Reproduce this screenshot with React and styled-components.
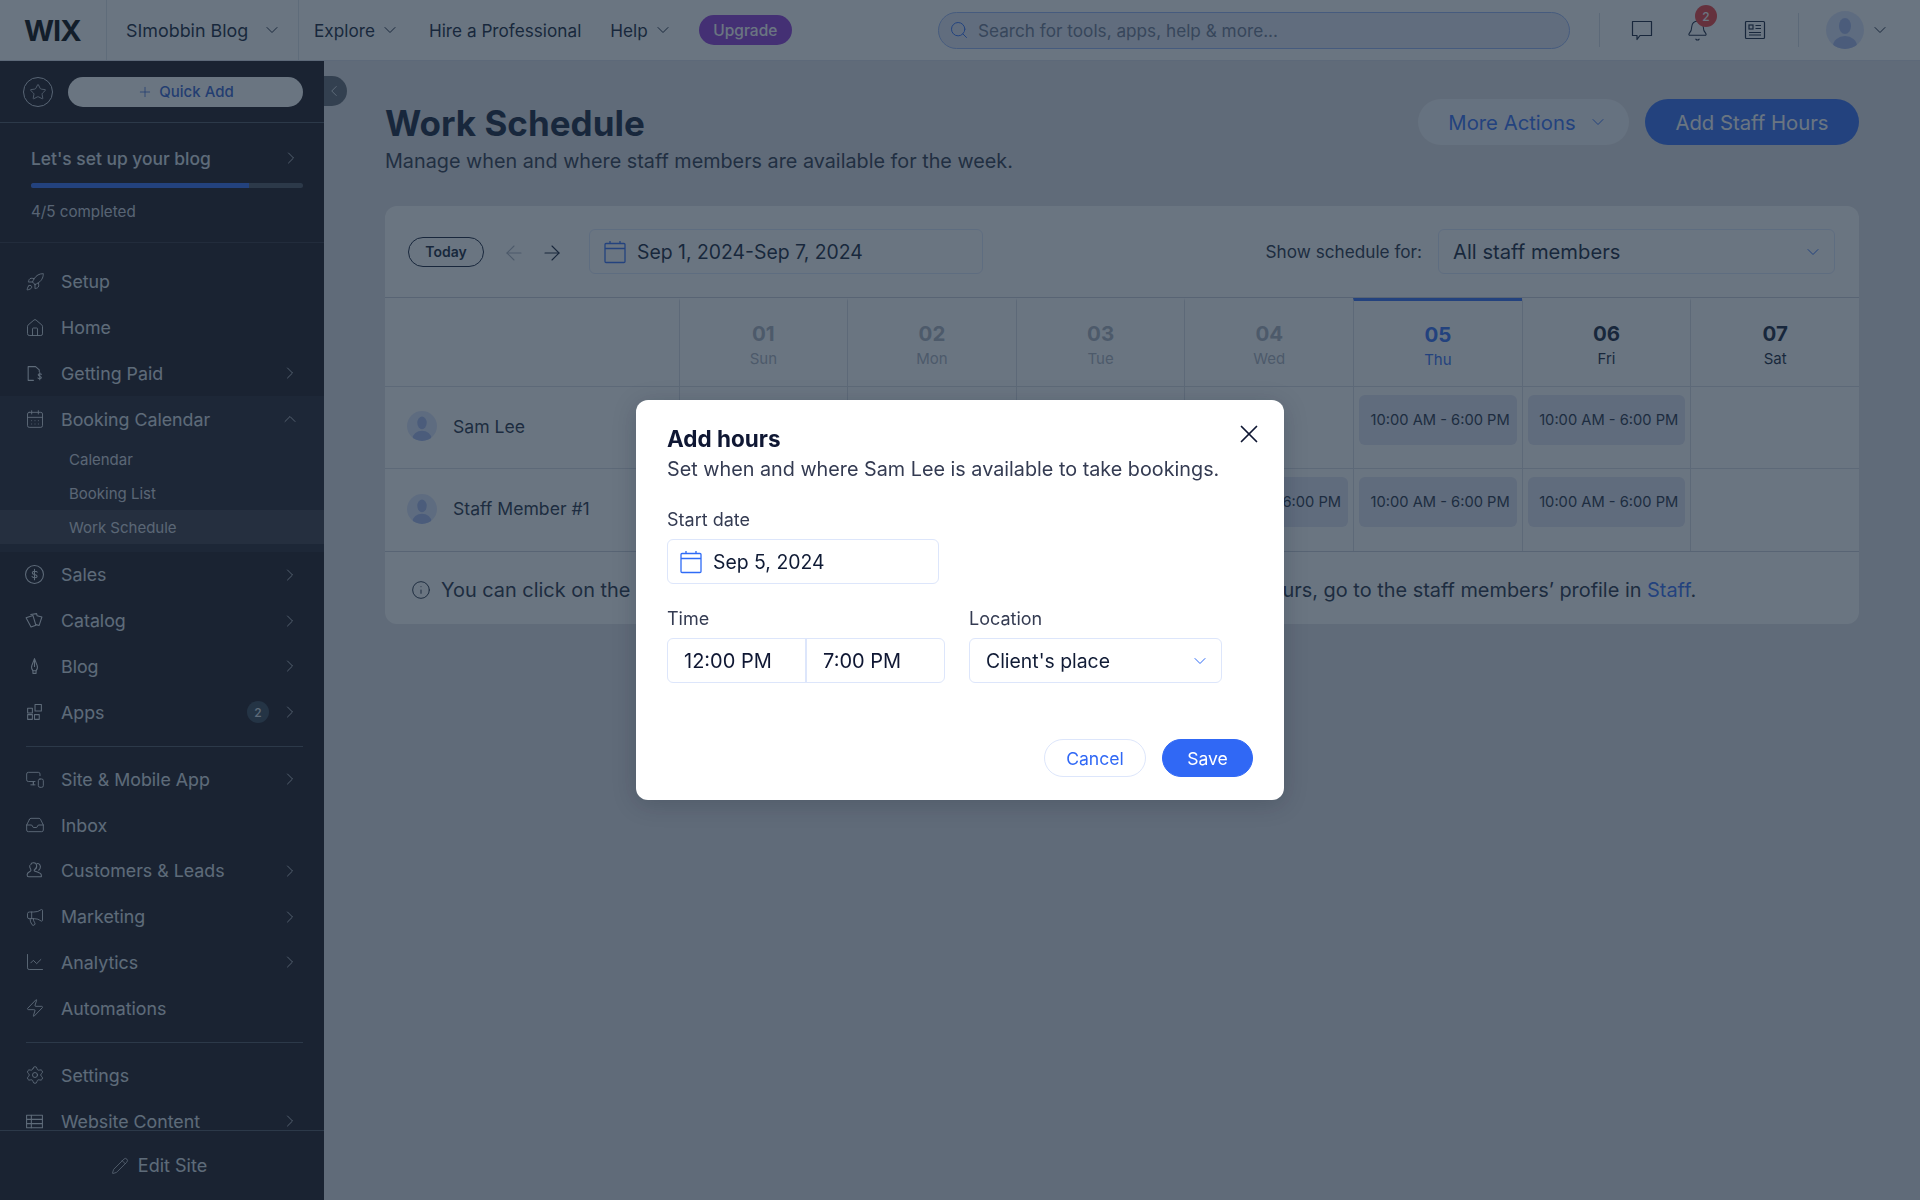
import React from 'react';
import styled, { createGlobalStyle } from 'styled-components';
import {
  ChevronDown, ChevronRight, ChevronUp, ChevronLeft, Plus, Star, Rocket, House, CalendarDays,
  MonitorSmartphone, Inbox, Megaphone, ChartLine, Zap, Settings, Pencil, Search,
  Bell, ArrowLeft, ArrowRight, Info, X,
} from 'lucide-react';

const GlobalStyle = createGlobalStyle`
  html, body { margin: 0; padding: 0; height: 100%; }
  body { font-family: Inter, "Noto Sans", "Liberation Sans", sans-serif; color: #101b35; overflow: hidden; }
  * { box-sizing: border-box; }
`;

const Page = styled.div`
  width: 1920px;
  height: 1200px;
  display: flex;
  flex-direction: column;
  background: #e2e1e6;
  overflow: hidden;
`;

const TopBar = styled.header`
  height: 61px;
  flex: none;
  display: flex;
  align-items: center;
  background: #fff;
  border-bottom: 1px solid #d9dde6;
`;

const LogoCell = styled.div`
  width: 107px;
  height: 100%;
  display: flex;
  align-items: center;
  padding-left: 24px;
  border-right: 1px solid #dfe3ea;
`;

const Logo = styled.span`
  font-size: 29px;
  font-weight: 700;
  letter-spacing: -1px;
  color: #000;
`;

const SiteCell = styled.div`
  width: 192px;
  height: 100%;
  display: flex;
  align-items: center;
  justify-content: space-between;
  padding: 0 16px 0 19px;
  border-right: 1px solid #dfe3ea;
  font-size: 17.9px;
  color: #101b35;
`;

const TopNav = styled.nav`
  display: flex;
  align-items: center;
  gap: 29px;
  padding-left: 15px;
  font-size: 17.2px;
  color: #101b35;
`;

const TopLink = styled.span`
  display: flex;
  align-items: center;
  gap: 5px;
`;

const Upgrade = styled.span`
  height: 30px;
  width: 93px;
  margin-left: -3px;
  display: flex;
  align-items: center;
  justify-content: center;
  border-radius: 15px;
  background: #8f35d8;
  color: #fff;
  font-size: 15.5px;
  font-weight: 500;
`;

const SearchBox = styled.div`
  width: 632px;
  height: 37px;
  margin-left: auto;
  display: flex;
  align-items: center;
  gap: 9px;
  padding-left: 10px;
  border: 1px solid #97b4f5;
  border-radius: 19px;
  background: #e4e8f5;
  color: #6a7590;
  font-size: 17.2px;
`;

const TopRight = styled.div`
  width: 350px;
  height: 100%;
  display: flex;
  align-items: center;
`;

const VLine = styled.span`
  width: 1px;
  height: 34px;
  flex: none;
  background: #d6dbe4;
  margin-left: ${(p) => p.$ml}px;
`;

const TopIcon = styled.span`
  position: relative;
  width: 24px;
  height: 24px;
  flex: none;
  display: flex;
  align-items: center;
  justify-content: center;
  margin-left: ${(p) => p.$ml}px;
  color: #101b35;
`;

const AvatarSlot = styled.span`
  width: 38px;
  height: 38px;
  flex: none;
  display: flex;
  margin-left: ${(p) => p.$ml}px;
`;

const Badge = styled.span`
  position: absolute;
  top: -13px;
  right: -8px;
  width: 22px;
  height: 22px;
  border-radius: 50%;
  display: flex;
  align-items: center;
  justify-content: center;
  background: #f03a3a;
  color: #fff;
  font-size: 12px;
  font-weight: 500;
`;

const Body = styled.div`
  flex: 1;
  display: flex;
  min-height: 0;
`;

const Sidebar = styled.aside`
  width: 324px;
  flex: none;
  display: flex;
  flex-direction: column;
  position: relative;
  background: #15101a;
  color: #dde1e8;
`;

const QuickRow = styled.div`
  height: 62px;
  flex: none;
  display: flex;
  align-items: center;
  gap: 15px;
  padding: 0 21px 0 23px;
  border-bottom: 1px solid #4b4f5c;
`;

const StarCircle = styled.span`
  width: 30px;
  height: 30px;
  flex: none;
  display: flex;
  align-items: center;
  justify-content: center;
  border: 1px solid #c9ced8;
  border-radius: 50%;
`;

const QuickAdd = styled.span`
  flex: 1;
  height: 30px;
  display: flex;
  align-items: center;
  justify-content: center;
  gap: 6px;
  border-radius: 15px;
  background: #fff;
  color: #2f5dd0;
  font-size: 15px;
  font-weight: 500;
`;

const CollapseTab = styled.span`
  position: absolute;
  top: 15px;
  left: 324px;
  width: 23px;
  height: 30px;
  display: flex;
  align-items: center;
  padding-left: 1px;
  border-radius: 0 15px 15px 0;
  background: #5f6570;
  color: #e7eaf0;
`;

const Progress = styled.div`
  height: 120px;
  flex: none;
  padding: 24px 21px 0 31px;
  border-bottom: 1px solid #2c2a35;
`;

const ProgressTitle = styled.div`
  display: flex;
  align-items: center;
  justify-content: space-between;
  height: 22px;
  padding-right: 2px;
  font-size: 17.4px;
  font-weight: 500;
`;

const Track = styled.div`
  height: 5px;
  margin-top: 14px;
  border-radius: 3px;
  background: #4b4f5c;
  overflow: hidden;
`;

const Fill = styled.div`
  height: 100%;
  background: #2f6bf6;
`;

const ProgressNote = styled.div`
  margin-top: 14px;
  font-size: 15.2px;
  color: #c9ced8;
`;

const Nav = styled.nav`
  flex: 1;
  min-height: 0;
  overflow: hidden;
  padding-top: 16px;
`;

const Row = styled.div`
  height: 45.75px;
  display: flex;
  align-items: center;
  padding: 0 24px 0 25px;
  font-size: 17.8px;
`;

const RowIcon = styled.span`
  width: 36px;
  flex: none;
  display: flex;
`;

const RowLabel = styled.span`
  flex: 1;
  white-space: nowrap;
`;

const Count = styled.span`
  width: 22px;
  height: 22px;
  margin-right: 11px;
  display: flex;
  align-items: center;
  justify-content: center;
  border-radius: 50%;
  background: #33404f;
  font-size: 12px;
  font-weight: 500;
`;

const Group = styled.div`
  padding-bottom: 8px;
  background: #1f1b28;
`;

const SubRow = styled.div`
  height: 34px;
  display: flex;
  align-items: center;
  padding-left: 69px;
  font-size: 15px;
  background: ${(p) => (p.$active ? '#35333f' : 'transparent')};
  color: #d0d4dc;
`;

const NavLine = styled.div`
  height: 1px;
  margin: 10.5px 21px 10px 26px;
  background: #4b4f5c;
`;

const EditFoot = styled.div`
  height: 70px;
  flex: none;
  display: flex;
  align-items: center;
  justify-content: center;
  gap: 9px;
  padding-right: 6px;
  border-top: 1px solid #4b4f5c;
  background: #15101a;
  font-size: 18px;
`;

const Main = styled.main`
  flex: 1;
  padding: 38px 61px 0;
`;

const Header = styled.div`
  display: flex;
  justify-content: space-between;
  align-items: flex-start;
`;

const Title = styled.h1`
  margin: 2px 0 0;
  font-size: 35px;
  line-height: 44px;
  font-weight: 650;
  color: #101b35;
`;

const Subtitle = styled.p`
  margin: 2px 0 0;
  font-size: 19.8px;
  line-height: 28px;
  color: #2a3347;
`;

const Actions = styled.div`
  display: flex;
  gap: 16px;
`;

const PillButton = styled.span`
  height: 46px;
  width: ${(p) => p.$w}px;
  display: flex;
  align-items: center;
  justify-content: center;
  gap: 12px;
  padding-left: ${(p) => p.$pl || 0}px;
  border-radius: 23px;
  font-size: 20.3px;
  background: ${(p) => (p.$primary ? '#2f6bf6' : '#f4f6fb')};
  color: ${(p) => (p.$primary ? '#fff' : '#2f6bf6')};
`;

const Card = styled.section`
  margin-top: 31px;
  height: 418px;
  border-radius: 12px;
  background: #fff;
  overflow: hidden;
`;

const Toolbar = styled.div`
  height: 92px;
  display: flex;
  align-items: center;
  padding: 0 24px 0 23px;
  border-bottom: 1px solid #c9ced8;
`;

const TodayChip = styled.span`
  width: 76px;
  height: 30px;
  display: flex;
  align-items: center;
  justify-content: center;
  border: 1px solid #101b35;
  border-radius: 15px;
  font-size: 14px;
  font-weight: 600;
`;

const Arrows = styled.div`
  display: flex;
  gap: 14px;
  margin: 3px 0 0 18px;
`;

const Field = styled.div`
  width: ${(p) => p.$w}px;
  height: 45px;
  flex: none;
  display: flex;
  align-items: center;
  gap: 11px;
  margin-left: ${(p) => p.$ml || 0}px;
  padding: 0 11px 0 ${(p) => p.$pl || 13}px;
  border: 1px solid #dde6fb;
  border-radius: 6px;
  font-size: ${(p) => p.$fs || 19.4}px;
  color: #101b35;
`;

const Spread = styled.span`
  flex: 1;
`;

const ToolbarLabel = styled.span`
  margin-left: auto;
  margin-right: 16px;
  font-size: 17.2px;
  color: #202b40;
`;

const Grid = styled.div`
  display: grid;
  grid-template-columns: 293.5px repeat(7, 1fr);
  grid-template-rows: 89px 82px 82px;
  border-bottom: 1px solid #c9ced8;
`;

const Cell = styled.div`
  position: relative;
  border-bottom: ${(p) => (p.$last ? 'none' : '1px solid #dadde5')};
  border-left: ${(p) => (p.$first ? 'none' : '1px solid #dadde5')};
`;

const DayCell = styled(Cell)`
  display: flex;
  flex-direction: column;
  align-items: center;
  padding-top: ${(p) => (p.$today ? 22 : 21)}px;
  border-top: 3px solid ${(p) => (p.$today ? '#2f6bf6' : 'transparent')};
  color: ${(p) => (p.$today ? '#2f6bf6' : p.$past ? '#a9afbd' : '#101b35')};
`;

const DayNum = styled.span`
  font-size: 20.5px;
  line-height: 24px;
  font-weight: 650;
`;

const DayName = styled.span`
  font-size: 15px;
  line-height: 20px;
  margin-top: 3px;
`;

const StaffCell = styled(Cell)`
  display: flex;
  align-items: center;
  gap: 16px;
  padding: 0 0 3px 22px;
  font-size: 17.6px;
  color: #202b40;
`;

const Slot = styled.div`
  margin: 8px 5px 0;
  height: 50px;
  display: flex;
  align-items: center;
  justify-content: flex-end;
  padding-right: 7px;
  border-radius: 6px;
  background: #e1e3f3;
  font-size: 14.7px;
  white-space: nowrap;
  color: #202b40;
`;

const Note = styled.div`
  height: 72px;
  display: flex;
  align-items: center;
  gap: 10px;
  padding: 4px 0 0 26px;
  font-size: 19.9px;
  color: #202b40;
  white-space: nowrap;
`;

const NoteLink = styled.span`
  color: #2f6bf6;
`;

const Overlay = styled.div`
  position: fixed;
  inset: 0;
  display: flex;
  align-items: center;
  justify-content: center;
  background: rgba(29, 45, 64, 0.66);
`;

const Dialog = styled.div`
  position: relative;
  width: 648px;
  height: 400px;
  padding: 25px 30px 0 31px;
  border-radius: 12px;
  background: #fff;
  box-shadow: 0 4px 24px rgba(10, 20, 40, 0.2);
  color: #0f1733;
`;

const CloseButton = styled.span`
  position: absolute;
  top: 19px;
  right: 20px;
  display: flex;
  color: #0f1733;
`;

const DialogTitle = styled.h2`
  margin: 0;
  font-size: 22.5px;
  line-height: 28px;
  font-weight: 650;
`;

const DialogText = styled.p`
  margin: 2px 0 0;
  font-size: 19.8px;
  line-height: 28px;
  color: #343b52;
`;

const Label = styled.label`
  display: block;
  height: 24px;
  margin-bottom: 7px;
  font-size: 18px;
  line-height: 24px;
  color: #343b52;
`;

const DateBlock = styled.div`
  margin-top: 25px;
`;

const FormRow = styled.div`
  margin-top: 23px;
  display: flex;
  gap: 24px;
`;

const TimeGroup = styled.div`
  width: 278px;
  height: 45px;
  display: flex;
  border: 1px solid #dde6fb;
  border-radius: 6px;
`;

const TimePart = styled.span`
  flex: 1;
  display: flex;
  align-items: center;
  padding-left: 16px;
  font-size: 20px;
  & + & {
    border-left: 2px solid #dde6fb;
  }
`;

const DialogActions = styled.div`
  position: absolute;
  right: 31px;
  bottom: 23px;
  display: flex;
  gap: 16px;
`;

const DialogButton = styled.span`
  width: ${(p) => p.$w}px;
  height: 38px;
  display: flex;
  align-items: center;
  justify-content: center;
  border-radius: 19px;
  font-size: 17.6px;
  border: 1px solid ${(p) => (p.$primary ? '#3068f5' : '#dde6fb')};
  background: ${(p) => (p.$primary ? '#3068f5' : '#fff')};
  color: ${(p) => (p.$primary ? '#fff' : '#3068f5')};
`;

// icons with no close match in lucide
const Stroke = ({ children, size = 19 }) => (
  <svg width={size} height={size} viewBox="0 0 18 18" fill="none" stroke="currentColor" strokeWidth="1" strokeLinecap="round" strokeLinejoin="round">
    {children}
  </svg>
);

const PaidIcon = () => (
  <Stroke>
    <path d="M8 15.5H3V2.5h7l3.5 3v1.5" />
    <path d="M15.5 9.8c-.4-.8-2.8-1-3 .4-.2 1.6 3.2 1 3 2.8-.2 1.3-2.6 1.2-3.2.2M14 8v7" />
  </Stroke>
);
const DollarIcon = () => (
  <Stroke>
    <circle cx="9" cy="9" r="8.5" />
    <path d="M11.5 6.8c-.5-1.3-4.4-1.4-4.6.5-.2 2.3 4.8 1.2 4.6 3.6-.2 1.7-4.2 1.5-4.9-.1M9 4v10" />
  </Stroke>
);
const CatalogIcon = () => (
  <Stroke>
    <path d="M1 6.5 7.5 4.2l2.8 9.3-4.6 1.7z" />
    <path d="M5.5 3.4 11 2.5l.5 2 4.5 1.2-2.6 8-3-.8" />
  </Stroke>
);
const BlogIcon = () => (
  <Stroke>
    <path d="M9 1.5 6.5 8c-.7 2 .1 4 1 5h3c.9-1 1.7-3 1-5z" />
    <path d="M9 4v5M7.5 13v2.5h3V13" />
  </Stroke>
);
const AppsIcon = () => (
  <Stroke>
    <rect x="9.5" y="1.5" width="6" height="6" />
    <rect x="2.5" y="5" width="4.5" height="4.5" />
    <rect x="2.5" y="11" width="4.5" height="4.5" />
    <rect x="9" y="11" width="4.5" height="4.5" />
  </Stroke>
);
const PeopleIcon = () => (
  <Stroke>
    <path d="M5.5 3.5c.5-2.5 5-2.5 5.5.5.3 1.8-.6 3.4-1.8 4-.7.4-.7 1.4.2 1.7 2.8.8 5.3 1.5 5.8 2.8.4 1 .3 2.5.3 2.5H3.5c-1 0-1.5-1-1.5-2 0-2 2-2.5 3.2-3.4.7-.6.5-1.4 0-2.2-.7-1-.9-2-.7-3" />
    <path d="M11.5 2.5c2-.6 3.8 2 2.8 4.5-.3.8-.9 1.3-1.3 1.7" />
  </Stroke>
);
const ContentIcon = () => (
  <Stroke>
    <rect x="1.5" y="3" width="15" height="12" />
    <path d="M1.5 7h15M1.5 11h15M6 3v12" />
  </Stroke>
);

const ChatIcon = () => (
  <svg width="22" height="21" viewBox="0 0 22 21" fill="none" stroke="currentColor" strokeWidth="1.2" strokeLinejoin="round">
    <path d="M1.5 1.5h19v14H9l-3 4v-4H1.5z" />
  </svg>
);

const NewsIcon = () => (
  <svg width="22" height="20" viewBox="0 0 22 20" fill="none" stroke="currentColor" strokeWidth="1.2">
    <rect x="1.5" y="1.5" width="19" height="17" rx="1" />
    <rect x="5" y="5" width="4" height="4" />
    <path d="M11.5 5.5H17M11.5 8.5H17M5 12.5h12M5 15h12" />
  </svg>
);

const CalendarIcon = () => (
  <svg width="22" height="24" viewBox="0 0 22 24" fill="none" stroke="#2f6bf6" strokeWidth="1.3">
    <rect x="1" y="3.5" width="20" height="19" rx="1" />
    <path d="M1 8.5h20M6 1v3M16 1v3" />
  </svg>
);

const Avatar = ({ size }) => (
  <svg width={size} height={size} viewBox="0 0 38 38">
    <defs>
      <clipPath id={`avatar-${size}`}>
        <circle cx="19" cy="19" r="19" />
      </clipPath>
    </defs>
    <circle cx="19" cy="19" r="19" fill="#dde4fb" />
    <g clipPath={`url(#avatar-${size})`} fill="#a3b7ee">
      <ellipse cx="19" cy="15" rx="6" ry="8" />
      <ellipse cx="19" cy="35" rx="12" ry="10" />
    </g>
  </svg>
);

const LucideIcon = (Icon) => () => <Icon size={20} strokeWidth={1.1} />;

const topItems = [
  { label: 'Setup', icon: LucideIcon(Rocket) },
  { label: 'Home', icon: LucideIcon(House) },
  { label: 'Getting Paid', icon: PaidIcon, more: true },
];
const afterGroup = [
  { label: 'Sales', icon: DollarIcon, more: true },
  { label: 'Catalog', icon: CatalogIcon, more: true },
  { label: 'Blog', icon: BlogIcon, more: true },
  { label: 'Apps', icon: AppsIcon, more: true, count: 2 },
];
const siteItems = [
  { label: 'Site & Mobile App', icon: LucideIcon(MonitorSmartphone), more: true },
  { label: 'Inbox', icon: LucideIcon(Inbox) },
  { label: 'Customers & Leads', icon: PeopleIcon, more: true },
  { label: 'Marketing', icon: LucideIcon(Megaphone), more: true },
  { label: 'Analytics', icon: LucideIcon(ChartLine), more: true },
  { label: 'Automations', icon: LucideIcon(Zap) },
];
const lastItems = [
  { label: 'Settings', icon: LucideIcon(Settings) },
  { label: 'Website Content', icon: ContentIcon, more: true },
];

const days = [
  { num: '01', name: 'Sun', past: true },
  { num: '02', name: 'Mon', past: true },
  { num: '03', name: 'Tue', past: true },
  { num: '04', name: 'Wed', past: true },
  { num: '05', name: 'Thu', today: true },
  { num: '06', name: 'Fri' },
  { num: '07', name: 'Sat' },
];

const hours = '10:00 AM - 6:00 PM';
const staff = [
  { name: 'Sam Lee', slots: [0, 0, 0, 0, 1, 1, 0] },
  { name: 'Staff Member #1', slots: [0, 0, 0, 1, 1, 1, 0] },
];

const NavRow = ({ item }) => {
  const Icon = item.icon;
  return (
    <Row>
      <RowIcon><Icon /></RowIcon>
      <RowLabel>{item.label}</RowLabel>
      {item.count && <Count>{item.count}</Count>}
      {item.more && <ChevronRight size={20} strokeWidth={1} />}
    </Row>
  );
};

export default function App() {
  return (
    <>
      <GlobalStyle />
      <Page>
        <TopBar>
          <LogoCell><Logo>WIX</Logo></LogoCell>
          <SiteCell>
            SImobbin Blog
            <ChevronDown size={20} strokeWidth={1.2} />
          </SiteCell>
          <TopNav>
            <TopLink>Explore <ChevronDown size={20} strokeWidth={1.2} /></TopLink>
            <TopLink>Hire a Professional</TopLink>
            <TopLink>Help <ChevronDown size={20} strokeWidth={1.2} /></TopLink>
            <Upgrade>Upgrade</Upgrade>
          </TopNav>
          <SearchBox>
            <Search size={20} strokeWidth={1.2} color="#2f6bf6" />
            Search for tools, apps, help &amp; more...
          </SearchBox>
          <TopRight>
            <VLine $ml={29} />
            <TopIcon $ml={30}><ChatIcon /></TopIcon>
            <TopIcon $ml={31}>
              <Bell size={23} strokeWidth={1.1} />
              <Badge>2</Badge>
            </TopIcon>
            <TopIcon $ml={34}><NewsIcon /></TopIcon>
            <VLine $ml={31} />
            <AvatarSlot $ml={27}><Avatar size={38} /></AvatarSlot>
            <TopIcon $ml={4}><ChevronDown size={20} strokeWidth={1.2} /></TopIcon>
          </TopRight>
        </TopBar>
        <Body>
          <Sidebar>
            <QuickRow>
              <StarCircle><Star size={18} strokeWidth={1} /></StarCircle>
              <QuickAdd><Plus size={16} strokeWidth={1.2} />Quick Add</QuickAdd>
            </QuickRow>
            <CollapseTab><ChevronLeft size={18} strokeWidth={1.2} /></CollapseTab>
            <Progress>
              <ProgressTitle>Let's set up your blog<ChevronRight size={20} strokeWidth={1} /></ProgressTitle>
              <Track><Fill style={{ width: '80%' }} /></Track>
              <ProgressNote>4/5 completed</ProgressNote>
            </Progress>
            <Nav>
              {topItems.map((item) => <NavRow key={item.label} item={item} />)}
              <Group>
                <Row>
                  <RowIcon><CalendarDays size={20} strokeWidth={1.1} /></RowIcon>
                  <RowLabel>Booking Calendar</RowLabel>
                  <ChevronUp size={20} strokeWidth={1} />
                </Row>
                <SubRow>Calendar</SubRow>
                <SubRow>Booking List</SubRow>
                <SubRow $active>Work Schedule</SubRow>
              </Group>
              {afterGroup.map((item) => <NavRow key={item.label} item={item} />)}
              <NavLine />
              {siteItems.map((item) => <NavRow key={item.label} item={item} />)}
              <NavLine />
              {lastItems.map((item) => <NavRow key={item.label} item={item} />)}
            </Nav>
            <EditFoot><Pencil size={18} strokeWidth={1} />Edit Site</EditFoot>
          </Sidebar>
          <Main>
            <Header>
              <div>
                <Title>Work Schedule</Title>
                <Subtitle>Manage when and where staff members are available for the week.</Subtitle>
              </div>
              <Actions>
                <PillButton $w={211} $pl={9}>More Actions <ChevronDown size={20} strokeWidth={1.2} /></PillButton>
                <PillButton $w={214} $primary>Add Staff Hours</PillButton>
              </Actions>
            </Header>
            <Card>
              <Toolbar>
                <TodayChip>Today</TodayChip>
                <Arrows>
                  <ArrowLeft size={24} strokeWidth={1.1} color="#a9afbd" />
                  <ArrowRight size={24} strokeWidth={1.1} color="#101b35" />
                </Arrows>
                <Field $w={394} $ml={25} $pl={14}>
                  <CalendarIcon />
                  Sep 1, 2024-Sep 7, 2024
                </Field>
                <ToolbarLabel>Show schedule for:</ToolbarLabel>
                <Field $w={397} $fs={20.2} $pl={14}>
                  <Spread>All staff members</Spread>
                  <ChevronDown size={20} strokeWidth={1.2} color="#2f6bf6" />
                </Field>
              </Toolbar>
              <Grid>
                <Cell $first />
                {days.map((d) => (
                  <DayCell key={d.num} $today={d.today} $past={d.past}>
                    <DayNum>{d.num}</DayNum>
                    <DayName>{d.name}</DayName>
                  </DayCell>
                ))}
                {staff.map((s, r) => (
                  <React.Fragment key={s.name}>
                    <StaffCell $first $last={r === 1}><Avatar size={30} />{s.name}</StaffCell>
                    {s.slots.map((on, i) => (
                      <Cell key={i} $last={r === 1}>{on ? <Slot>{hours}</Slot> : null}</Cell>
                    ))}
                  </React.Fragment>
                ))}
              </Grid>
              <Note>
                <Info size={20} strokeWidth={1.2} />
                <span>
                  You can click on the schedule to add or edit hours for a specific date. To edit recurring hours, go to the staff members’ profile in <NoteLink>Staff</NoteLink>.
                </span>
              </Note>
            </Card>
          </Main>
        </Body>
        <Overlay>
          <Dialog>
            <CloseButton><X size={30} strokeWidth={1.4} /></CloseButton>
            <DialogTitle>Add hours</DialogTitle>
            <DialogText>Set when and where Sam Lee is available to take bookings.</DialogText>
            <DateBlock>
              <Label>Start date</Label>
              <Field $w={272} $pl={12}>
                <CalendarIcon />
                Sep 5, 2024
              </Field>
            </DateBlock>
            <FormRow>
              <div>
                <Label>Time</Label>
                <TimeGroup>
                  <TimePart>12:00 PM</TimePart>
                  <TimePart>7:00 PM</TimePart>
                </TimeGroup>
              </div>
              <div>
                <Label>Location</Label>
                <Field $w={253} $pl={16}>
                  <Spread>Client's place</Spread>
                  <ChevronDown size={20} strokeWidth={1.2} color="#2f6bf6" />
                </Field>
              </div>
            </FormRow>
            <DialogActions>
              <DialogButton $w={102}>Cancel</DialogButton>
              <DialogButton $w={91} $primary>Save</DialogButton>
            </DialogActions>
          </Dialog>
        </Overlay>
      </Page>
    </>
  );
}
